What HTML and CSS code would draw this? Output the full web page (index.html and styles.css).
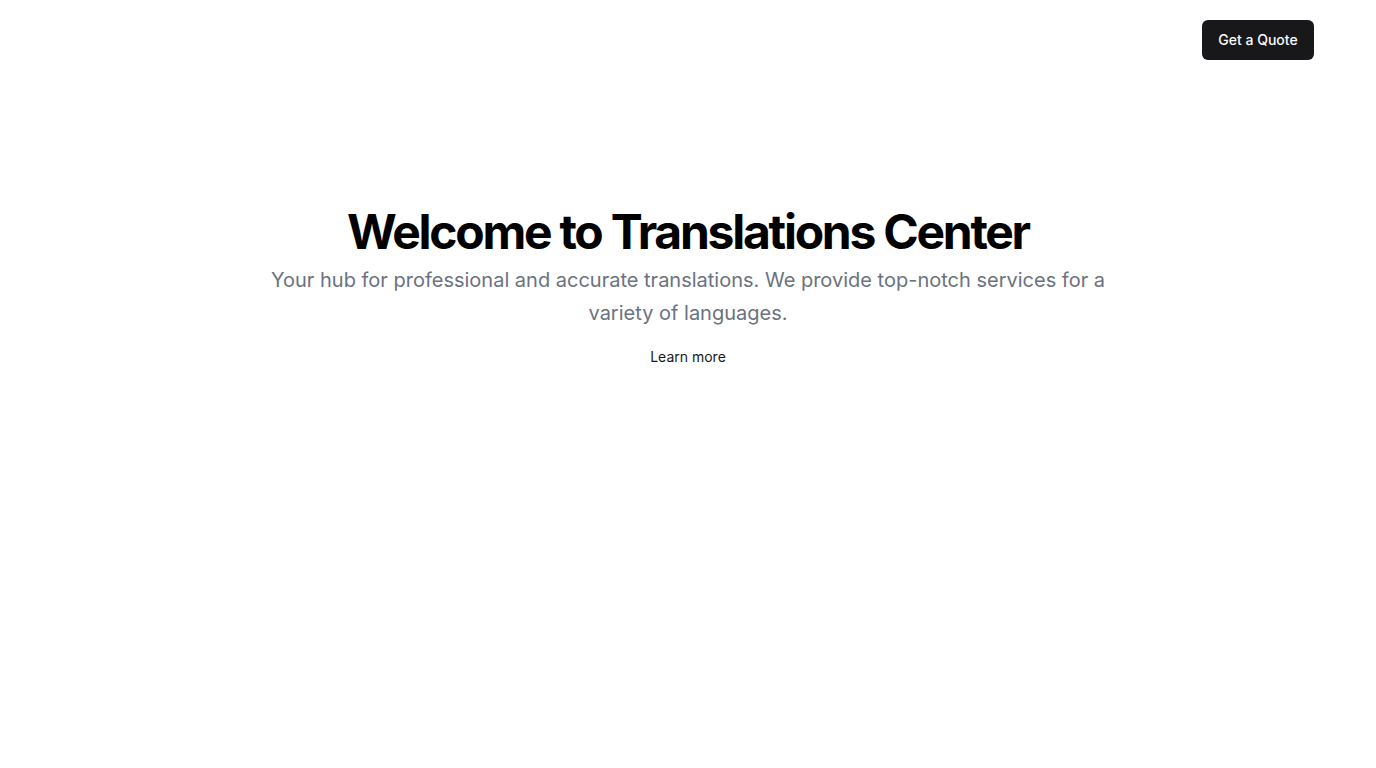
FILE: index.html
```
<!DOCTYPE html>
<html lang="en">
<head>
<meta charset="utf-8">
<title>Translations Center</title>
<link rel="stylesheet" href="styles.css">
</head>
<body>
<header class="header">
  <a class="quote-btn" href="#">Get a Quote</a>
</header>
<main>
  <section class="hero">
    <div class="hero-text">
      <h1 class="title">Welcome to Translations Center</h1>
      <p class="lead">Your hub for professional and accurate translations. We provide top-notch services for a variety of languages.</p>
    </div>
    <a class="learn" href="#">Learn more</a>
  </section>
</main>
</body>
</html>
```
FILE: styles.css
```
* { box-sizing: border-box; }
html, body { margin: 0; padding: 0; background: #ffffff; }
body { font-family: Inter, "Noto Sans", sans-serif; color: #09090b; }
a { text-decoration: none; }
.header {
  height: 80px;
  display: flex;
  align-items: center;
  justify-content: flex-end;
  padding: 0 62px;
}
.quote-btn {
  display: inline-flex;
  align-items: center;
  justify-content: center;
  height: 40px;
  width: 112px;
  padding-bottom: 2px;
  border-radius: 6px;
  background: #18181b;
  color: #fafafa;
  font-size: 14px;
  font-weight: 500;
}
.hero {
  padding: 128px 16px;
  display: flex;
  flex-direction: column;
  align-items: center;
  gap: 16px;
  text-align: center;
}
.hero-text {
  display: flex;
  flex-direction: column;
  align-items: center;
  gap: 8px;
}
.title {
  margin: 0;
  font-size: 48px;
  line-height: 1;
  font-weight: 700;
  letter-spacing: -0.047em;
  color: #000;
}
.lead {
  margin: 0;
  max-width: 850px;
  font-size: 20px;
  line-height: 32.5px;
  color: #6b7280;
}
.learn {
  font-size: 14px;
  font-weight: 400;
  line-height: 24px;
  color: #18181b;
}
```
